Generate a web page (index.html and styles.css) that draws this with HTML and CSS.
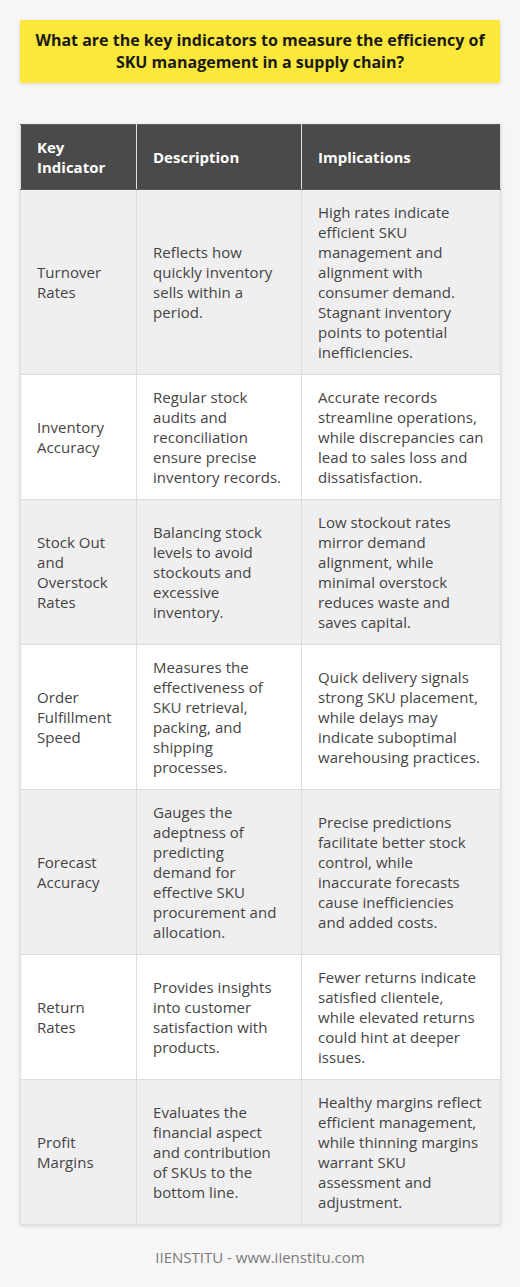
FILE: index.html
```html
<!DOCTYPE html>
<html lang="en">
<head>
<meta charset="utf-8">
<title>SKU management indicators</title>
<link rel="stylesheet" href="styles.css">
</head>
<body>
<div class="page">
  <h1 class="title">What are the key indicators to measure the efficiency of SKU management in a supply chain?</h1>
  <table class="grid">
    <colgroup>
      <col class="c1"><col class="c2"><col class="c3">
    </colgroup>
    <thead>
      <tr><th>Key Indicator</th><th>Description</th><th>Implications</th></tr>
    </thead>
    <tbody>
      <tr><td>Turnover Rates</td><td>Reflects how quickly inventory sells within a period.</td><td>High rates indicate efficient SKU management and alignment with consumer demand. Stagnant inventory points to potential inefficiencies.</td></tr>
      <tr><td>Inventory Accuracy</td><td>Regular stock audits and reconciliation ensure precise inventory records.</td><td>Accurate records streamline operations, while discrepancies can lead to sales loss and dissatisfaction.</td></tr>
      <tr><td>Stock Out and Overstock Rates</td><td>Balancing stock levels to avoid stockouts and excessive inventory.</td><td>Low stockout rates mirror demand alignment, while minimal overstock reduces waste and saves capital.</td></tr>
      <tr><td>Order Fulfillment Speed</td><td>Measures the effectiveness of SKU retrieval, packing, and shipping processes.</td><td>Quick delivery signals strong SKU placement, while delays may indicate suboptimal warehousing practices.</td></tr>
      <tr><td>Forecast Accuracy</td><td>Gauges the adeptness of predicting demand for effective SKU procurement and allocation.</td><td>Precise predictions facilitate better stock control, while inaccurate forecasts cause inefficiencies and added costs.</td></tr>
      <tr><td>Return Rates</td><td>Provides insights into customer satisfaction with products.</td><td>Fewer returns indicate satisfied clientele, while elevated returns could hint at deeper issues.</td></tr>
      <tr><td>Profit Margins</td><td>Evaluates the financial aspect and contribution of SKUs to the bottom line.</td><td>Healthy margins reflect efficient management, while thinning margins warrant SKU assessment and adjustment.</td></tr>
    </tbody>
  </table>
  <p class="footer">IIENSTITU - www.iienstitu.com</p>
</div>
</body>
</html>
```

FILE: styles.css
```css
html, body {
  margin: 0;
  padding: 0;
  background: #f6f6f6;
}
body {
  font-family: "Open Sans", "Liberation Sans", sans-serif;
  color: #444;
}
.page {
  padding: 20px;
}
.title {
  margin: 0;
  background: #fce83a;
  color: #1a1a1a;
  font-size: 16px;
  font-weight: 700;
  line-height: 22px;
  text-align: center;
  padding: 9px 12px 10px;
  box-shadow: 0 1px 4px rgba(0,0,0,0.12);
}
.grid {
  margin-top: 41px;
  width: 480px;
  border-collapse: collapse;
  table-layout: fixed;
  font-size: 15px;
  line-height: 20px;
  box-shadow: 0 1px 4px rgba(0,0,0,0.12);
}
.c1 { width: 116px; }
.c2 { width: 165px; }
.c3 { width: 199px; }
.grid th, .grid td {
  border: 1px solid #dcdcdc;
  padding: 12px 16px;
  text-align: left;
  vertical-align: middle;
}
.grid td {
  letter-spacing: 0.05px;
}
.grid th {
  background: #4a4a4a;
  color: #fff;
  font-weight: 700;
  border-color: #5a5a5a #e0e0e0;
}
.grid tbody tr:nth-child(odd) td {
  background: #efefef;
}
.grid tbody tr:nth-child(even) td {
  background: #ffffff;
}
.footer {
  margin: 22px 0 0;
  text-align: center;
  color: #7a7a7a;
  font-size: 15px;
  line-height: 20px;
}
```
